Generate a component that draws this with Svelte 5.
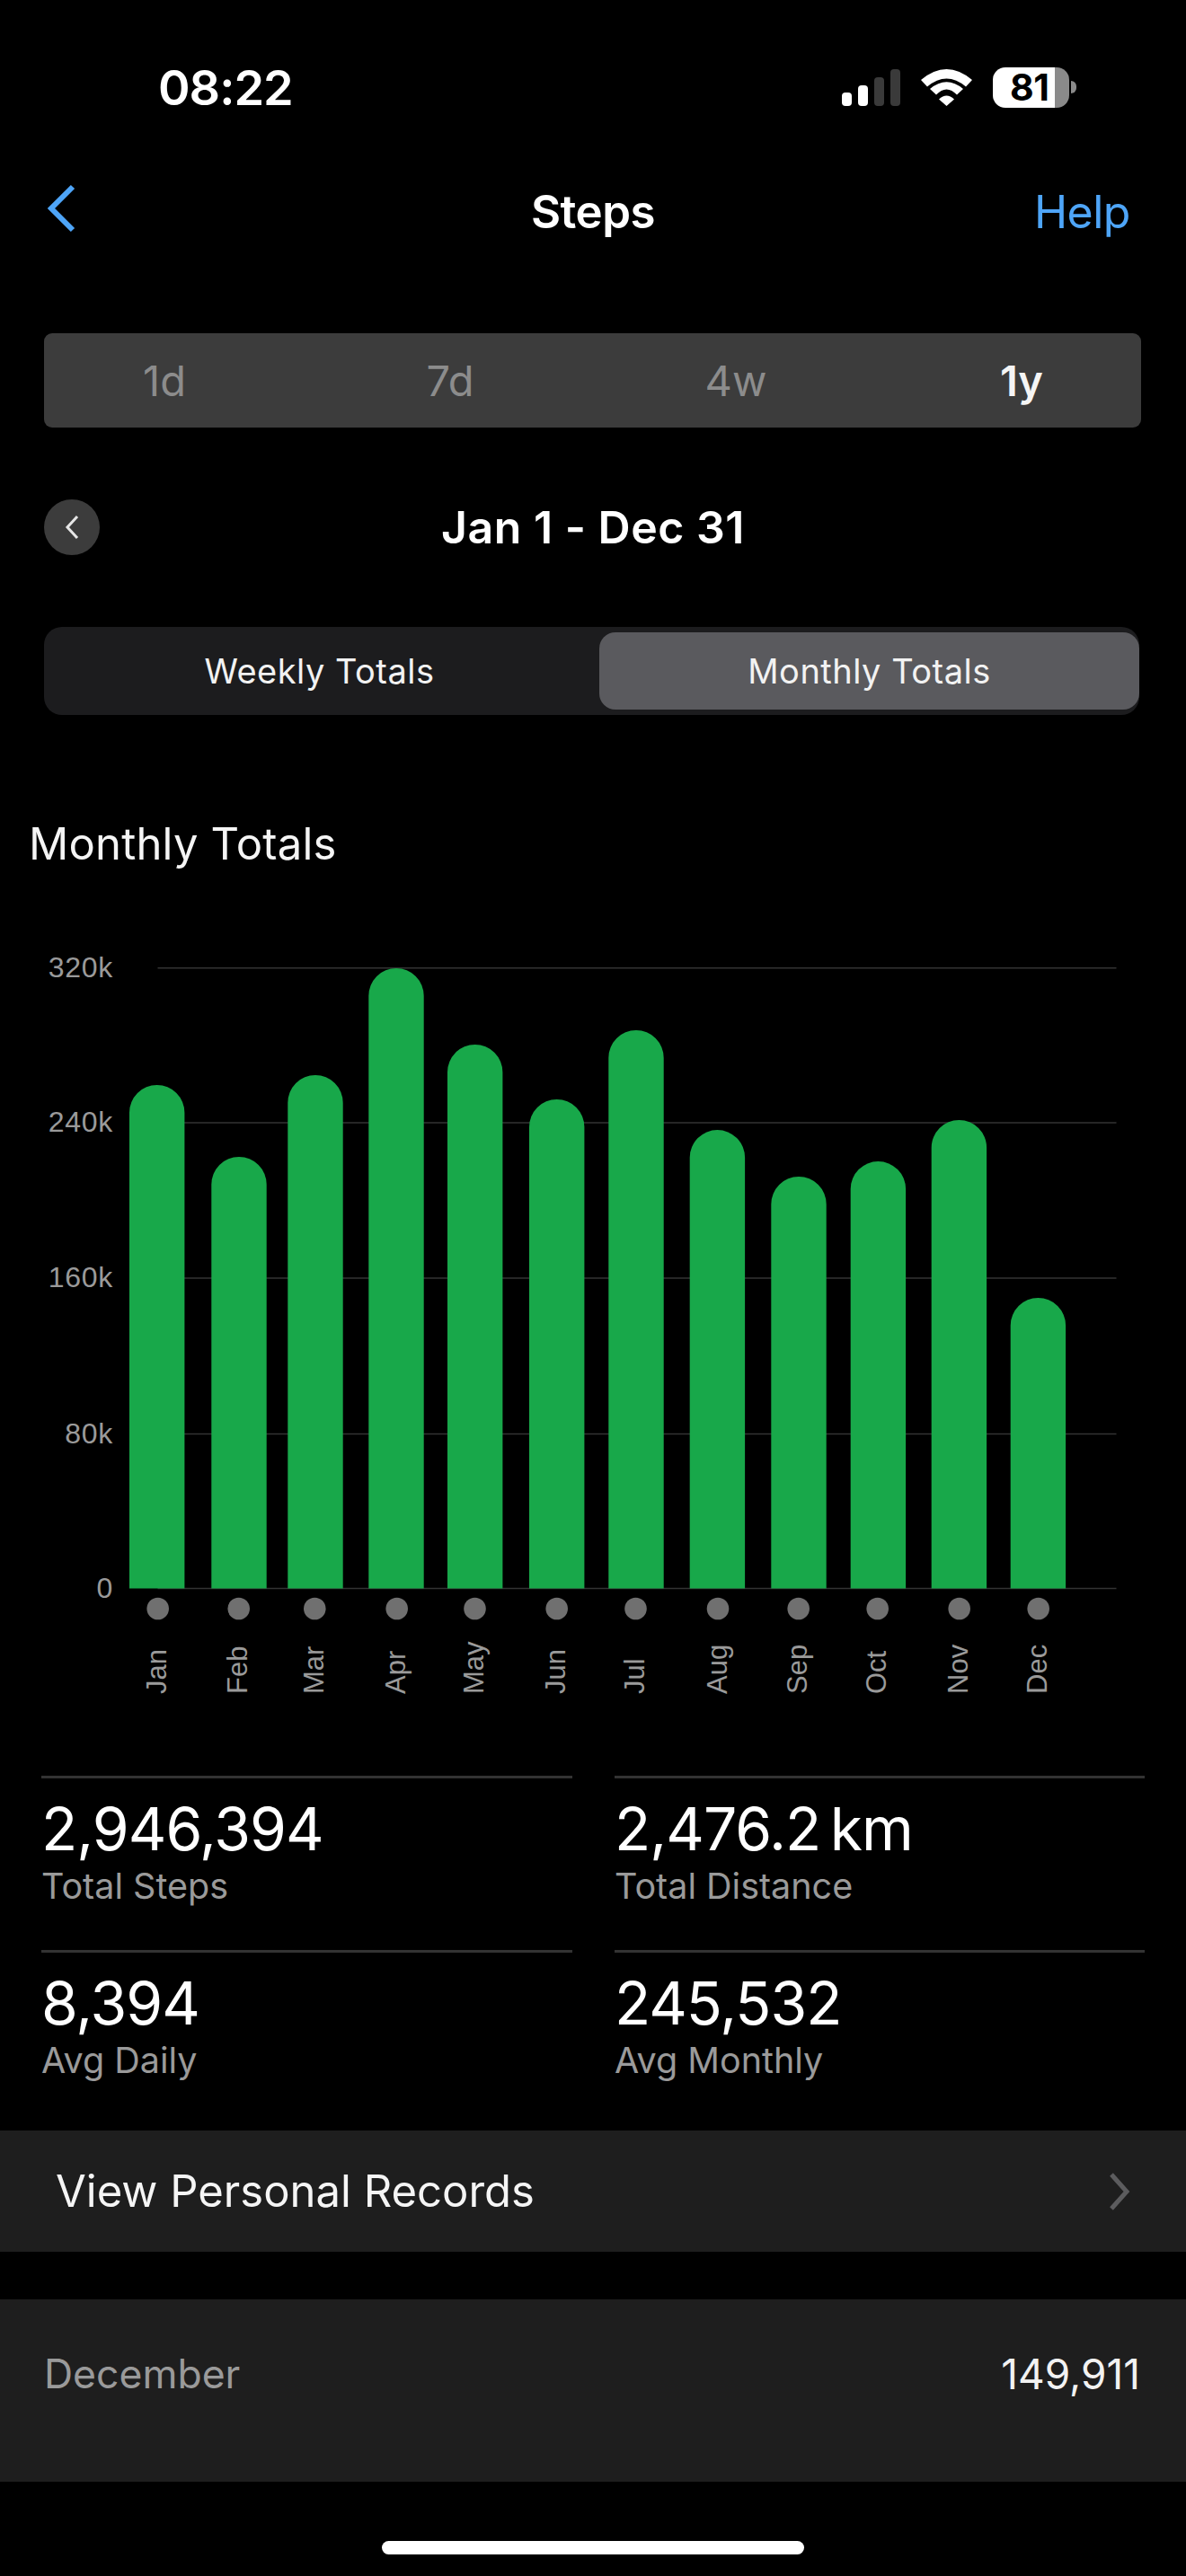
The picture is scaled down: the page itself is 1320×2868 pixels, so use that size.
<script>
  const bars = [
    { m: 'Jan', x: 144, top: 1208, dot: 175.7 },
    { m: 'Feb', x: 235.3, top: 1288, dot: 265.7 },
    { m: 'Mar', x: 320.3, top: 1197, dot: 350.3 },
    { m: 'Apr', x: 410.3, top: 1078, dot: 441.7 },
    { m: 'May', x: 498, top: 1163, dot: 528.5 },
    { m: 'Jun', x: 589, top: 1224, dot: 619.7 },
    { m: 'Jul', x: 677.3, top: 1147, dot: 707.5 },
    { m: 'Aug', x: 767.7, top: 1258, dot: 799 },
    { m: 'Sep', x: 858.3, top: 1310, dot: 888.7 },
    { m: 'Oct', x: 946.7, top: 1293, dot: 976.7 },
    { m: 'Nov', x: 1036.7, top: 1247, dot: 1067.7 },
    { m: 'Dec', x: 1124.7, top: 1445, dot: 1155.7 }
  ];
  const W = 61.4;
  const BASE = 1768.5;
  const grid = [
    { y: 1077.7, t: '320k' },
    { y: 1250, t: '240k' },
    { y: 1423, t: '160k' },
    { y: 1596.5, t: '80k' },
    { y: 1768.5, t: '0' }
  ];
  const barPath = (b) =>
    `M${b.x} ${BASE}V${b.top + W / 2}A${W / 2} ${W / 2} 0 0 1 ${b.x + W} ${b.top + W / 2}V${BASE}Z`;
  const stats = [
    { v: '2,946,394', l: 'Total Steps' },
    { v: '2,476.2 km', l: 'Total Distance' },
    { v: '8,394', l: 'Avg Daily' },
    { v: '245,532', l: 'Avg Monthly' }
  ];
  const ranges = ['1d', '7d', '4w', '1y'];
</script>

<div class="screen">
  <header class="status">
    <span class="time">08:22</span>
    <div class="indicators">
      <div class="signal">
        <i class="s1"></i><i class="s2"></i><i class="s3"></i><i class="s4"></i>
      </div>
      <svg class="wifi" width="57" height="41" viewBox="0 0 57 41" aria-hidden="true">
        <path fill="#fff" d="M0 12Q28.5-12 57 12L50 19.5Q28.5 1.500 7 19.500Z" />
        <path fill="#fff" d="M10 22Q28.5 6.500 47 22L40 28.500Q28.500 16.500 17 28.500Z" />
        <path fill="#fff" d="M20 33.500Q28.500 25.500 37 33.500L28.500 41Z" />
      </svg>
      <div class="battery">
        <div class="cell"><span>81</span></div>
        <i class="nub"></i>
      </div>
    </div>
  </header>

  <nav class="nav">
    <svg class="back" width="34" height="56" viewBox="0 0 34 56" aria-hidden="true">
      <path d="M29 4L5 28L29 52" fill="none" stroke="#4ea5f8" stroke-width="6" />
    </svg>
    <h1>Steps</h1>
    <span class="help">Help</span>
  </nav>

  <div class="ranges">
    <div class="ranges-inner">
      {#each ranges as r}
        <span class:on={r === '1y'}>{r}</span>
      {/each}
    </div>
  </div>

  <div class="daterow">
    <span class="round">
      <svg width="20" height="30" viewBox="0 0 20 30" aria-hidden="true">
        <path d="M16 3L5 15L16 27" fill="none" stroke="#e6e6e6" stroke-width="3" />
      </svg>
    </span>
    <strong>Jan 1 - Dec 31</strong>
    <span></span>
  </div>

  <div class="totals">
    <span class="tab first">Weekly Totals</span>
    <span class="tab active">Monthly Totals</span>
  </div>

  <h2>Monthly Totals</h2>

  <svg class="chart" width="1320" height="880" viewBox="0 1040 1320 880">
    {#each grid as g}
      <line x1="175.500" x2="1242.500" y1={g.y} y2={g.y} class="gridline" />
      <text class="ylabel" x="126" y={g.y + 10} text-anchor="end">{g.t}</text>
    {/each}
    {#each bars as b}
      <path d={barPath(b)} class="bar" />
      <circle cx={b.dot} cy="1791" r="12.300" class="dot" />
      <text class="xlabel" transform="translate({b.dot + 9.500} 1886) rotate(-90)">{b.m}</text>
    {/each}
  </svg>

  <section class="stats">
    {#each stats as s}
      <div class="stat">
        <div class="value">{s.v}</div>
        <div class="label">{s.l}</div>
      </div>
    {/each}
  </section>

  <div class="records">
    <span>View Personal Records</span>
    <svg width="24" height="42" viewBox="0 0 24 42" aria-hidden="true">
      <path d="M3 2L20 21L3 40" fill="none" stroke="#5c5c5e" stroke-width="5" />
    </svg>
  </div>

  <div class="month">
    <span class="mname">December</span>
    <span class="mval">149,911</span>
  </div>

  <div class="home"><i></i></div>
</div>

<style>
  :global(body) {
    margin: 0;
    background: #000;
  }
  .screen {
    width: 1320px;
    height: 2868px;
    background: #000;
    color: #fff;
    font-family: Inter, "Liberation Sans", sans-serif;
    overflow: hidden;
  }
  h1, h2 {
    margin: 0;
  }
  .status {
    height: 192px;
    display: flex;
    align-items: center;
    justify-content: space-between;
    padding: 2px 122px 0 176px;
    box-sizing: border-box;
  }
  .time {
    font-size: 54px;
    font-weight: 600;
    letter-spacing: -1px;
  }
  .indicators {
    display: flex;
    align-items: center;
    gap: 23px;
  }
  .signal {
    display: flex;
    align-items: flex-end;
    gap: 7.300px;
    height: 41px;
  }
  .signal i {
    display: block;
    width: 10.700px;
    border-radius: 4px;
    background: #fff;
  }
  .signal .s1 { height: 15px; }
  .signal .s2 { height: 23px; }
  .signal .s3 { height: 32px; background: #3a3a3a; }
  .signal .s4 { height: 41px; background: #3a3a3a; }
  .wifi {
    display: block;
  }
  .battery {
    display: flex;
    align-items: center;
    gap: 2px;
  }
  .cell {
    width: 85px;
    height: 45px;
    border-radius: 14px;
    background: linear-gradient(90deg, #fff 0 69px, #8a8a8a 69px);
    display: flex;
    align-items: center;
    color: #000;
    font-size: 41px;
    font-weight: 700;
    line-height: 45px;
  }
  .cell span {
    margin-left: 19px;
    letter-spacing: -0.500px;
  }
  .nub {
    display: block;
    width: 6px;
    height: 14px;
    border-radius: 0 7px 7px 0;
    background: #8a8a8a;
  }
  .nav {
    height: 80px;
    display: grid;
    grid-template-columns: 1fr auto 1fr;
    align-items: center;
  }
  .back {
    display: block;
    margin: 0 0 4px 52px;
  }
  .nav h1 {
    font-size: 51px;
    font-weight: 600;
    letter-spacing: -0.500px;
    line-height: 80px;
    padding-top: 4px;
  }
  .help {
    justify-self: end;
    padding: 4px 62px 0 0;
    font-size: 50px;
    color: #4ea5f8;
    letter-spacing: -0.500px;
    line-height: 80px;
  }
  .ranges {
    margin: 99px 50px 0 49px;
    height: 105px;
    background: #3c3c3c;
    border-radius: 9px;
  }
  .ranges-inner {
    margin: 0 -26px 0 -25px;
    height: 100%;
    display: grid;
    grid-template-columns: repeat(4, 1fr);
    align-items: center;
    justify-items: center;
    font-size: 47px;
    color: #8c8c8c;
  }
  .ranges-inner .on {
    color: #f5f5f5;
    font-weight: 600;
  }
  .daterow {
    margin-top: 80px;
    height: 62px;
    display: grid;
    grid-template-columns: 1fr auto 1fr;
    align-items: center;
  }
  .round {
    margin-left: 49px;
    width: 62px;
    height: 62px;
    border-radius: 50%;
    background: #3c3c3c;
    display: flex;
    align-items: center;
    justify-content: center;
  }
  .daterow strong {
    font-size: 50px;
    font-weight: 600;
    letter-spacing: 0.500px;
  }
  .totals {
    margin: 80px 52px 0 49px;
    height: 98px;
    box-sizing: border-box;
    padding: 6px 3px;
    border-radius: 20px;
    background: #1c1c1e;
    display: grid;
    grid-template-columns: 615px 601px;
  }
  .tab {
    display: flex;
    align-items: center;
    justify-content: center;
    font-size: 38px;
    letter-spacing: 0.500px;
    color: #f2f2f2;
  }
  .tab.first {
    padding-right: 8px;
  }
  .tab.active {
    background: #5a5a5e;
    border-radius: 18px;
  }
  h2 {
    margin: 0;
    padding: 114px 0 0 32px;
    height: 130px;
    font-size: 49px;
    font-weight: 400;
    line-height: 60px;
    letter-spacing: 0.200px;
    color: #f5f5f5;
  }
  .chart {
    display: block;
  }
  .gridline {
    stroke: #333;
    stroke-width: 1.500;
  }
  .bar {
    fill: #18a84a;
  }
  .dot {
    fill: #707070;
  }
  .ylabel, .xlabel {
    font-family: "Liberation Sans", sans-serif;
    fill: #9a9a9a;
  }
  .ylabel {
    font-size: 32px;
    letter-spacing: 0.700px;
  }
  .xlabel {
    font-size: 31px;
  }
  .stats {
    margin-top: 57px;
    padding: 0 46px;
    display: grid;
    grid-template-columns: 591px 590px;
    column-gap: 47px;
  }
  .stat {
    height: 193.500px;
    box-sizing: border-box;
    border-top: 3px solid #333;
    padding-top: 16px;
  }
  .value {
    font-size: 66px;
    line-height: 80px;
    letter-spacing: -1px;
    word-spacing: -7px;
  }
  .label {
    font-size: 39.500px;
    line-height: 48px;
    color: #9a9a9a;
  }
  .records {
    margin-top: 8px;
    height: 135px;
    background: #1e1e1e;
    display: flex;
    align-items: center;
    justify-content: space-between;
    padding: 0 62px 0 62px;
    font-size: 49px;
    color: #f5f5f5;
  }
  .month {
    margin-top: 53px;
    height: 203px;
    background: #1e1e1e;
    display: flex;
    align-items: center;
    justify-content: space-between;
    padding: 0 51px 38px 49px;
    box-sizing: border-box;
  }
  .mname {
    font-size: 44.500px;
    color: #9a9a9a;
  }
  .mval {
    font-size: 46px;
    color: #f2f2f2;
  }
  .home {
    margin-top: 66px;
    display: flex;
    justify-content: center;
  }
  .home i {
    display: block;
    width: 470px;
    height: 15px;
    border-radius: 8px;
    background: #fff;
  }
</style>
